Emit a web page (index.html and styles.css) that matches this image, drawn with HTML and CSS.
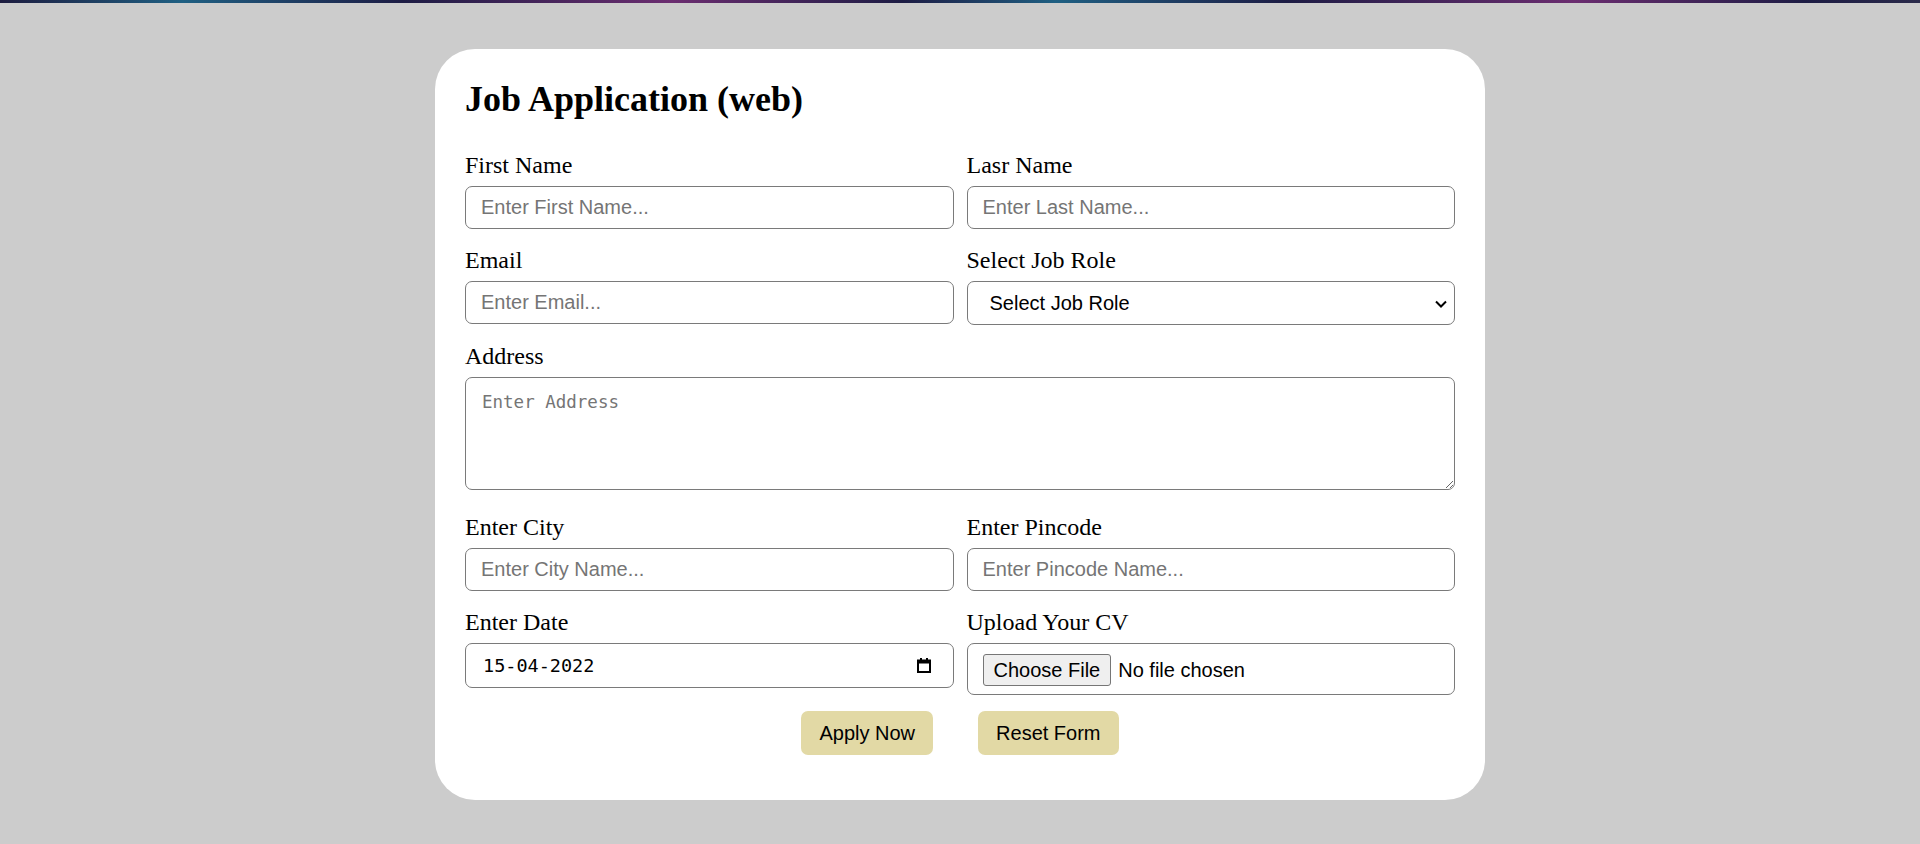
FILE: index.html
```html
<!DOCTYPE html>
<html lang="en">
<head>
<meta charset="utf-8">
<title>Job Application (web)</title>
<link rel="stylesheet" href="styles.css">
</head>
<body>
<div class="topbar"></div>
<main class="page">
  <form class="card">
    <h2 class="title">Job Application (web)</h2>
    <div class="grid">
      <div class="field">
        <label class="label" for="fname">First Name</label>
        <input class="control" id="fname" type="text" placeholder="Enter First Name...">
      </div>
      <div class="field">
        <label class="label" for="lname">Lasr Name</label>
        <input class="control" id="lname" type="text" placeholder="Enter Last Name...">
      </div>
      <div class="field">
        <label class="label" for="email">Email</label>
        <input class="control" id="email" type="text" placeholder="Enter Email...">
      </div>
      <div class="field">
        <label class="label" for="role">Select Job Role</label>
        <div class="select-wrap">
          <select class="control select" id="role">
            <option>Select Job Role</option>
            <option>Frontend Developer</option>
            <option>Backend Developer</option>
          </select>
          <svg class="chevron" width="12" height="8" viewBox="0 0 12 8"><path d="M1 1.5 L6 6.5 L11 1.5" fill="none" stroke="#000" stroke-width="2"/></svg>
        </div>
      </div>
      <div class="field wide">
        <label class="label" for="addr">Address</label>
        <textarea class="control area" id="addr" placeholder="Enter Address"></textarea>
      </div>
      <div class="field">
        <label class="label" for="city">Enter City</label>
        <input class="control" id="city" type="text" placeholder="Enter City Name...">
      </div>
      <div class="field">
        <label class="label" for="pin">Enter Pincode</label>
        <input class="control" id="pin" type="text" placeholder="Enter Pincode Name...">
      </div>
      <div class="field">
        <label class="label" for="date">Enter Date</label>
        <div class="control date">
          <input class="date-text" id="date" type="text" value="15-04-2022" readonly>
          <svg class="cal" width="14" height="15" viewBox="0 0 14 15"><rect x="1" y="2.5" width="12" height="11.5" fill="none" stroke="#000" stroke-width="2"/><rect x="1" y="2" width="12" height="3.5" fill="#000"/><rect x="3" y="0" width="2" height="3" fill="#000"/><rect x="9" y="0" width="2" height="3" fill="#000"/></svg>
        </div>
      </div>
      <div class="field">
        <label class="label" for="cv">Upload Your CV</label>
        <input class="control file" id="cv" type="file">
      </div>
    </div>
    <div class="actions">
      <button class="btn" type="submit">Apply Now</button>
      <button class="btn" type="reset">Reset Form</button>
    </div>
  </form>
</main>
</body>
</html>
```

FILE: styles.css
```css
html, body {
  margin: 0;
  padding: 0;
}
body {
  background: #cccccc;
  font-family: "Liberation Serif", "Times New Roman", serif;
  color: #000;
  min-height: 844px;
}
.topbar {
  height: 3px;
  background: linear-gradient(90deg, #1d1c3f 0%, #1f5f82 9.5%, #1d1c44 21%, #6b2d70 35%, #1d1c44 47%, #1f5f82 55%, #1d1c44 67%, #6b2d70 82%, #1d1c44 94%, #2a2a4a 100%);
}
.page {
  padding-top: 46px;
}
.card {
  width: 1050px;
  box-sizing: border-box;
  margin: 0 auto;
  background: #fff;
  border-radius: 40px;
  padding: 30px 30px 45px;
}
.title {
  margin: 0 0 31px;
  font-size: 36px;
  line-height: 41px;
  font-weight: bold;
}
.grid {
  display: grid;
  grid-template-columns: 1fr 1fr;
  column-gap: 13px;
  row-gap: 17px;
}
.field {
  display: flex;
  flex-direction: column;
  min-width: 0;
}
.wide {
  grid-column: 1 / span 2;
}
.label {
  font-size: 24px;
  line-height: 28px;
  margin-bottom: 7px;
}
.control {
  box-sizing: border-box;
  width: 100%;
  font-family: "Liberation Sans", Arial, sans-serif;
  font-size: 20px;
  line-height: 23px;
  color: #000;
  background: #fff;
  border: 1px solid #7a7a7a;
  border-radius: 7px;
  padding: 9px 15px;
  height: 43px;
  margin: 0;
  outline: none;
}
.control::placeholder {
  color: #757575;
  opacity: 1;
}
.select-wrap {
  position: relative;
}
.select {
  appearance: none;
  -webkit-appearance: none;
  height: 44px;
  padding: 9px 40px 9px 22px;
}
.chevron {
  position: absolute;
  right: 8px;
  top: 19px;
  pointer-events: none;
}
.area {
  height: 113px;
  resize: vertical;
  font-family: "DejaVu Sans Mono", "Liberation Mono", monospace;
  font-size: 17.5px;
  line-height: 22px;
  padding: 13px 16px;
  margin-bottom: 6px;
}
.date {
  display: flex;
  align-items: center;
  height: 45px;
  padding: 0 16px 0 17px;
}
.date-text {
  flex: 1;
  min-width: 0;
  border: 0;
  padding: 0;
  margin: 0;
  outline: none;
  background: transparent;
  font-family: "DejaVu Sans Mono", "Liberation Mono", monospace;
  font-size: 18.5px;
  color: #000;
}
.cal {
  flex: none;
  margin-right: 6px;
}
.file {
  height: 52px;
  padding: 10px 15px 8px;
}
.file::file-selector-button {
  font-family: "Liberation Sans", Arial, sans-serif;
  font-size: 20px;
  line-height: 23px;
  height: 32px;
  padding: 3px 10px;
  margin: 0 7px 0 0;
  background: #efefef;
  border: 1px solid #767676;
  border-radius: 3px;
  color: #000;
}
.actions {
  display: flex;
  justify-content: center;
  gap: 45px;
  margin-top: 16px;
}
.btn {
  font-family: "Liberation Sans", Arial, sans-serif;
  font-size: 20px;
  line-height: 23px;
  color: #000;
  background: #e2d9a5;
  border: 0;
  border-radius: 7px;
  padding: 10.5px 18px;
  margin: 0;
}
```
